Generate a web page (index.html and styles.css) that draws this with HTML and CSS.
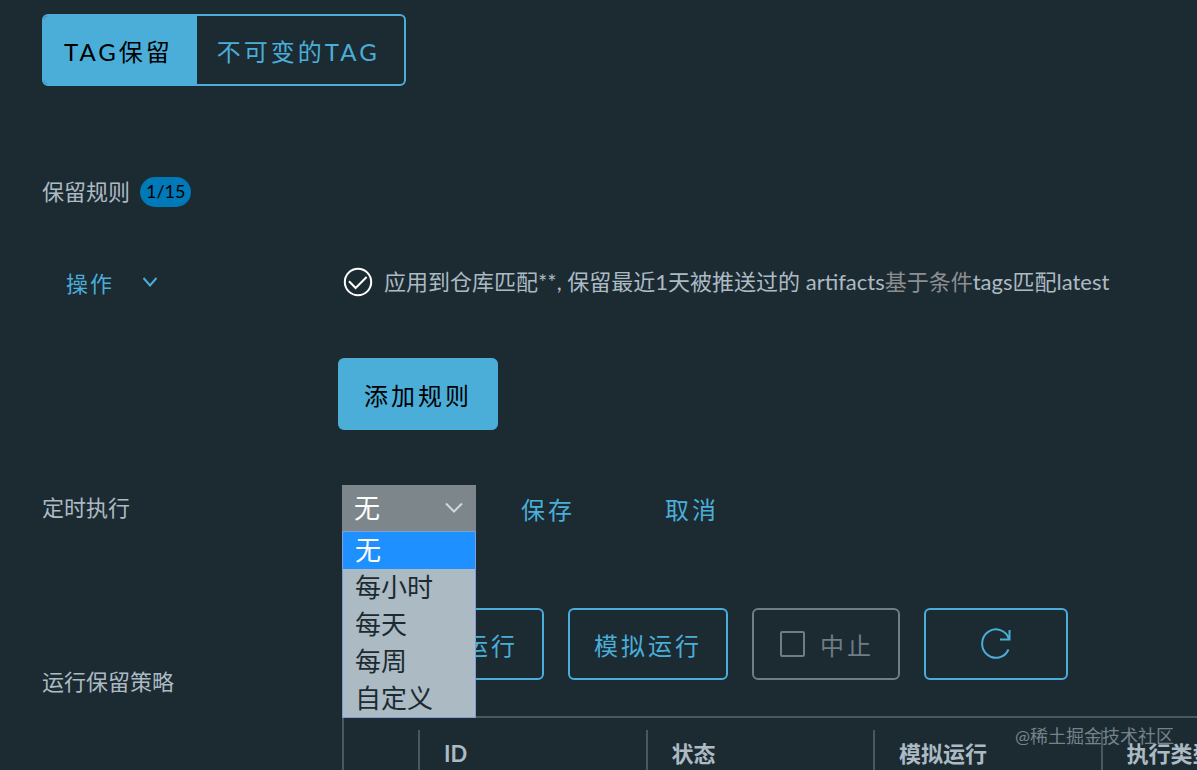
FILE: index.html
```html
<!DOCTYPE html>
<html lang="zh-CN">
<head>
    <meta charset="UTF-8">
    <meta name="viewport" content="width=device-width, initial-scale=1.0">
    <title>TAG保留</title>
    <link rel="stylesheet" href="styles.css">
</head>
<body>
    <main class="page">
        <div class="tabs">
            <button type="button" class="tab active">TAG保留</button>
            <button type="button" class="tab">不可变的TAG</button>
        </div>

        <div class="rules-title">
            <span>保留规则</span>
            <span class="badge">1/15</span>
        </div>

        <div class="row rule">
            <button type="button" class="action">
                操作
                <svg class="caret" width="14" height="10" viewBox="0 0 14 10"><path d="M.5 1 7 8.5 13.5 1"/></svg>
            </button>
            <div class="rule-text">
                <svg class="check" width="30" height="30" viewBox="0 0 30 30"><circle cx="15" cy="15" r="13.2"/><path d="M6 14.2 12.6 21 23.6 10"/></svg>
                <p>应用到仓库匹配**, 保留最近1天被推送过的 artifacts<span class="muted">基于条件</span>tags匹配latest</p>
            </div>
        </div>

        <div class="add-rule">
            <button type="button" class="btn primary">添加规则</button>
        </div>

        <div class="row schedule">
            <label for="schedule">定时执行</label>
            <div class="schedule-form">
                <div class="select">
                    <select id="schedule">
                        <option>无</option>
                        <option>每小时</option>
                        <option>每天</option>
                        <option>每周</option>
                        <option>自定义</option>
                    </select>
                    <svg class="arrow" width="18" height="12" viewBox="0 0 18 12"><path d="M1 1.5l8 8 8-8"/></svg>
                    <ul class="options">
                        <li class="selected">无</li>
                        <li>每小时</li>
                        <li>每天</li>
                        <li>每周</li>
                        <li>自定义</li>
                    </ul>
                </div>
                <button type="button" class="link">保存</button>
                <button type="button" class="link">取消</button>
            </div>
        </div>

        <div class="row policy">
            <span class="policy-label">运行保留策略</span>
            <div class="policy-body">
                <div class="buttons">
                    <button type="button" class="btn">
                        <svg width="28" height="28" viewBox="0 0 28 28"><path d="M5 3v22l19-11z"/></svg>
                        立即运行
                    </button>
                    <button type="button" class="btn">模拟运行</button>
                    <button type="button" class="btn" disabled>
                        <svg width="28" height="28" viewBox="0 0 28 28"><rect x="3" y="2" width="23" height="24" rx="1"/></svg>
                        中止
                    </button>
                    <button type="button" class="btn refresh" aria-label="刷新">
                        <svg width="32" height="34" viewBox="0 0 32 34"><path d="M28.5 22.5A13.8 14.2 0 1 1 29 12M29.5 3v9.500H20"/></svg>
                    </button>
                </div>
                <table class="history">
                    <thead>
                        <tr>
                            <th class="expand"></th>
                            <th>ID</th>
                            <th>状态</th>
                            <th>模拟运行</th>
                            <th>执行类型</th>
                        </tr>
                    </thead>
                </table>
            </div>
        </div>
    </main>
    <div class="watermark">@稀土掘金技术社区</div>
</body>
</html>
```
FILE: styles.css
```css
* {
    box-sizing: border-box;
}
body {
    margin: 0;
    height: 100vh;
    overflow: hidden;
    background: #1c2a32;
    color: #acbac3;
    font-family: Lato, "Noto Sans CJK SC", sans-serif;
    font-size: 22px;
    line-height: 32px;
}
button,
select {
    font-family: inherit;
    cursor: pointer;
}
svg {
    fill: none;
    stroke: currentColor;
    stroke-width: 2;
    flex: none;
}
.page {
    padding: 14px 0 0 42px;
}
.tabs {
    display: inline-flex;
    height: 72px;
    border: 2px solid #4aaed9;
    border-radius: 6px;
    overflow: hidden;
}
.tab {
    border: none;
    padding: 0 24px 0 20px;
    background: transparent;
    color: #4aaed9;
    font-size: 24px;
    letter-spacing: 3px;
}
.tab.active {
    background: #4aaed9;
    color: #000;
}
.rules-title {
    display: flex;
    align-items: center;
    gap: 10px;
    margin-top: 90px;
}
.badge {
    height: 30px;
    padding: 0 6px;
    border-radius: 15px;
    background: #0079b8;
    color: #000;
    font-size: 18px;
    line-height: 28px;
}
.row {
    display: grid;
    grid-template-columns: 300px 1fr;
}
.rule {
    align-items: center;
    margin-top: 58px;
}
.action {
    display: flex;
    align-items: center;
    gap: 29px;
    border: none;
    padding: 0 24px;
    background: transparent;
    color: #4aaed9;
    font-size: 22px;
    letter-spacing: 2px;
}
.rule-text {
    display: flex;
    align-items: center;
    gap: 11px;
    padding-left: 1px;
}
.rule-text p {
    margin: 0;
    white-space: nowrap;
}
.check {
    color: #fff;
}
.muted {
    color: #8c8f92;
}
.add-rule {
    margin-top: 60px;
    padding-left: 296px;
}
.btn {
    display: flex;
    align-items: center;
    justify-content: center;
    gap: 14px;
    height: 72px;
    border: 2px solid #4aaed9;
    border-radius: 6px;
    padding: 0 24px;
    background: transparent;
    color: #4aaed9;
    font-size: 24px;
    letter-spacing: 3px;
    white-space: nowrap;
}
.btn.primary {
    background: #4aaed9;
    color: #000;
}
.btn:disabled {
    border-color: #6f7d85;
    color: #6f7d85;
}
.schedule {
    align-items: center;
    margin-top: 55px;
}
.schedule-form {
    display: flex;
    align-items: center;
}
.select {
    position: relative;
    width: 134px;
    height: 46px;
    margin-right: 45px;
}
.select select {
    appearance: none;
    width: 100%;
    height: 100%;
    border: none;
    padding: 0 12px;
    background: #7d878b;
    color: #fff;
    font-size: 26px;
}
.arrow {
    position: absolute;
    top: 17px;
    right: 13px;
    color: #d2d8db;
    pointer-events: none;
}
.options {
    position: absolute;
    top: 100%;
    left: 0;
    z-index: 1;
    width: 100%;
    margin: 0;
    padding: 0;
    border: 1px solid #7f9ed8;
    background: #acbac3;
    color: #1c2a32;
    font-size: 26px;
    line-height: 37px;
    list-style: none;
}
.options li {
    padding-left: 12px;
}
.options .selected {
    background: #1e90ff;
    color: #fff;
}
.link {
    border: none;
    padding: 0;
    margin-right: 90px;
    background: transparent;
    color: #4aaed9;
    font-size: 24px;
    letter-spacing: 3px;
}
.policy {
    margin-top: 77px;
}
.policy-label {
    margin-top: 58px;
}
.policy-body {
    min-width: 0;
    overflow: hidden;
}
.buttons {
    display: flex;
    gap: 24px;
    margin-bottom: 36px;
}
.refresh {
    width: 144px;
}
.history {
    width: 988px;
    border: 2px solid #4a575f;
    border-spacing: 0;
    table-layout: fixed;
}
.history th {
    height: 66px;
    padding: 12px 0 0;
    line-height: 48px;
    text-align: left;
    vertical-align: top;
}
.history th:not(.expand)::before {
    content: "";
    float: left;
    width: 2px;
    height: 54px;
    margin-right: 24px;
    background: #4a575f;
}
.history .expand {
    width: 74px;
}
.watermark {
    position: absolute;
    right: 23px;
    bottom: 18px;
    color: #76828a;
    font-size: 18px;
}
```
